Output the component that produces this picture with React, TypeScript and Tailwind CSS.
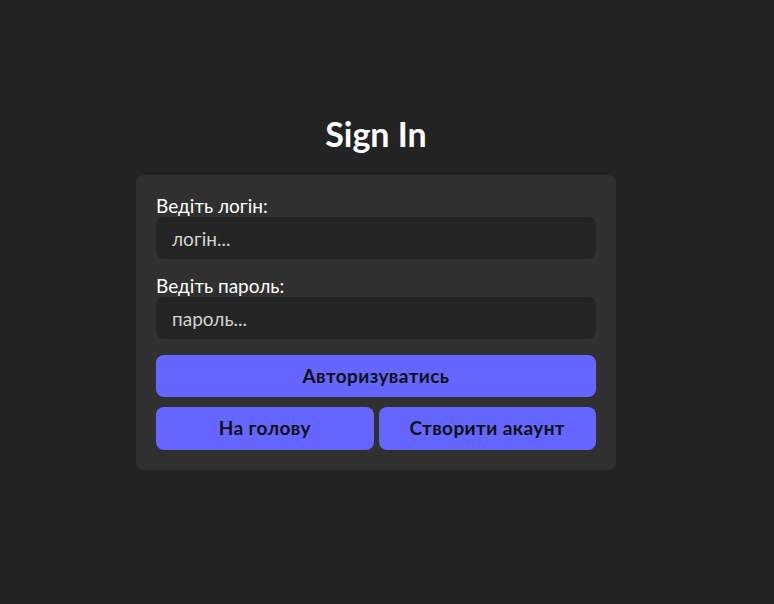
export default function App() {
  return (
    <div className="min-h-screen bg-[#232323] font-['Lato',sans-serif] pr-[22px] flex flex-col items-center pt-[113px]">
      <h1 className="text-[34px] leading-[42px] font-bold text-white">Sign In</h1>
      <form className="mt-[20px] w-[480px] bg-[#303030] rounded-lg p-5 flex flex-col">
        <label className="text-[19px] leading-[22px] text-white">Ведіть логін:</label>
        <input
          className="h-[42px] rounded-lg bg-[#242424] px-4 text-[19px] text-[#d4d4d4] placeholder:text-[#d4d4d4] outline-none"
          placeholder="логін..."
        />
        <label className="mt-4 text-[19px] leading-[22px] text-white">Ведіть пароль:</label>
        <input
          type="password"
          className="h-[42px] rounded-lg bg-[#242424] px-4 text-[19px] text-[#d4d4d4] placeholder:text-[#d4d4d4] outline-none"
          placeholder="пароль..."
        />
        <button type="button" className="mt-4 h-[42px] rounded-lg bg-[#6466ff] text-[19px] font-bold tracking-[0.4px] text-[#111]">
          Авторизуватись
        </button>
        <div className="mt-[10px] flex gap-[5px]">
          <button type="button" className="flex-1 h-[43px] rounded-lg bg-[#6466ff] text-[19px] font-bold tracking-[0.4px] text-[#111]">
            На голову
          </button>
          <button type="button" className="flex-1 h-[43px] rounded-lg bg-[#6466ff] text-[19px] font-bold tracking-[0.4px] text-[#111]">
            Створити акаунт
          </button>
        </div>
      </form>
    </div>
  );
}
